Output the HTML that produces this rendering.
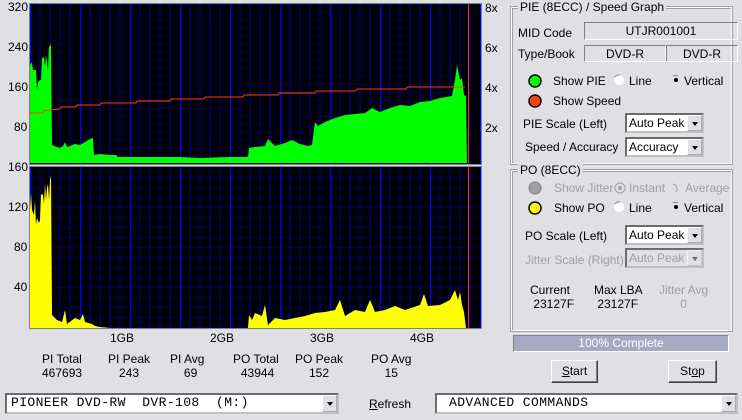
<!DOCTYPE html>
<html><head><meta charset="utf-8"><style>
body{margin:0;width:742px;height:420px;background:#e0dfe3;font-family:"Liberation Sans",sans-serif;font-size:11px;color:#000;position:relative;overflow:hidden}
.a{position:absolute;white-space:nowrap}
.grp{position:absolute;border:1px solid #fff;box-shadow:inset 1px 1px 0 #a0a0a0;outline:1px solid #a0a0a0}
.gt{position:absolute;background:#e0dfe3;padding:0 2px;top:-8px;left:6px}
.fld{position:absolute;border:1px solid;border-color:#808080 #fff #fff #808080;text-align:center;line-height:16px}
.sel{position:absolute;background:#fff;border:2px inset #c0c0c0;box-sizing:border-box;line-height:16px;padding-left:2px;font-size:12px}
.sel .ar{position:absolute;right:0;top:0;width:15px;bottom:0;background:#e0dfe3;border:1px outset #fff;box-sizing:border-box}
.sel .ar:after{content:"";position:absolute;left:4px;top:6px;border:3px solid transparent;border-top:4px solid #000;border-bottom:0;}
.btn{position:absolute;border:1px solid;border-color:#fff #404040 #404040 #fff;box-shadow:inset -1px -1px 0 #808080;text-align:center;font-size:12px}
.dis{color:#a0a0a0}
.mono{font-family:"Liberation Mono",monospace;font-size:13px;letter-spacing:0.4px;white-space:pre}
</style></head><body>
<svg class="a" style="left:0;top:0" width="500" height="335">
<defs>
<pattern id="g1" x="30" y="4" width="50" height="8" patternUnits="userSpaceOnUse">
<rect width="50" height="8" fill="#000"/>
<path d="M10 0V8M20 0V8M30 0V8M40 0V8M0 0H50" stroke="#00009a" stroke-width="1"/>
<path d="M0.5 0V8" stroke="#0000ff" stroke-width="1.5"/>
</pattern>
<pattern id="g2" x="30" y="167" width="50" height="10" patternUnits="userSpaceOnUse">
<rect width="50" height="10" fill="#000"/>
<path d="M10 0V10M20 0V10M30 0V10M40 0V10M0 0H50" stroke="#00009a" stroke-width="1"/>
<path d="M0.5 0V10" stroke="#0000ff" stroke-width="1.5"/>
</pattern>
</defs>
<rect x="29" y="3" width="453" height="162" fill="#808080"/>
<rect x="30" y="4" width="451" height="160" fill="url(#g1)"/>
<polygon fill="#00ff00" points="30,163 30,65 32,62 33,70 36,70 37,90 38,82 40,80 41,80 42,58 44,57 45,66 46,55 48,70 49,46 50,47 51,43 52,145 57,147 60,148 63,146 65,142 67,147 70,146 75,144 80,145 85,142 90,139 93,138 94,155 100,154 110,155 116,155 118,157 150,157 180,157 200,158 230,157 248,157 249,148 255,147 265,146 268,139 275,146 285,143 292,140 300,144 308,146 312,145 315,122 318,126 325,122 335,118 345,115 355,114 365,113 372,108 380,112 390,108 400,105 410,106 420,102 430,101 440,98 452,96 455,80 457,65 460,80 462,78 464,95 466,96 467,163"/>
<polyline fill="none" stroke="#ff4000" stroke-width="1" points="30,113 43,113 44,111 50,110 60,109 61,107 76,107 77,105 100,105 101,103 136,103 137,101 170,101 171,99 204,99 205,97 243,97 244,95 278,95 279,93 315,93 316,91 356,91 357,89 406,89 407,87 465,87"/>
<line x1="468.5" y1="4" x2="468.5" y2="164" stroke="#ff3000"/>
<rect x="29" y="166" width="453" height="163" fill="#808080"/>
<rect x="30" y="167" width="451" height="161" fill="url(#g2)"/>
<polygon fill="#ffff00" points="30,328 30,210 31,193 32,210 34,215 35,200 36,225 37,218 39,223 40,220 41,194 43,195 44,204 45,183 46,200 47,188 48,184 49,200 50,180 51,176 52,315 57,320 62,322 65,310 67,324 75,318 80,320 83,314 85,322 92,324 95,326 100,327 110,328 240,328 248,328 249,315 252,320 255,313 262,316 265,305 268,325 275,318 285,320 295,318 305,316 315,313 325,312 335,310 340,300 345,316 355,310 365,312 370,300 375,312 385,310 395,306 405,310 420,305 424,294 428,306 440,305 450,300 455,290 458,300 460,292 462,305 464,312 466,328"/>
<line x1="468.5" y1="167" x2="468.5" y2="328" stroke="#ff3000"/>
</svg>
<div class="a" style="left:8px;top:0px;font-size:12px">320</div>
<div class="a" style="left:8px;top:40px;font-size:12px">240</div>
<div class="a" style="left:8px;top:80px;font-size:12px">160</div>
<div class="a" style="left:14px;top:120px;font-size:12px">80</div>
<div class="a" style="left:8px;top:160px;font-size:12px">160</div>
<div class="a" style="left:8px;top:200px;font-size:12px">120</div>
<div class="a" style="left:14px;top:240px;font-size:12px">80</div>
<div class="a" style="left:14px;top:280px;font-size:12px">40</div>
<div class="a" style="left:485px;top:1px;font-size:12px">8x</div>
<div class="a" style="left:485px;top:41px;font-size:12px">6x</div>
<div class="a" style="left:485px;top:81px;font-size:12px">4x</div>
<div class="a" style="left:485px;top:121px;font-size:12px">2x</div>
<div class="a" style="left:110px;top:331px;font-size:12px">1GB</div>
<div class="a" style="left:210px;top:331px;font-size:12px">2GB</div>
<div class="a" style="left:310px;top:331px;font-size:12px">3GB</div>
<div class="a" style="left:410px;top:331px;font-size:12px">4GB</div>
<div class="a" style="left:42px;top:352px;font-size:12px">PI Total<br>467693</div>
<div class="a" style="left:108px;top:352px;font-size:12px;text-align:center">PI Peak<br>243</div>
<div class="a" style="left:170px;top:352px;font-size:12px;text-align:center">PI Avg<br>&nbsp;&nbsp;69</div>
<div class="a" style="left:233px;top:352px;font-size:12px;text-align:center">PO Total<br>&nbsp;43944</div>
<div class="a" style="left:295px;top:352px;font-size:12px;text-align:center">PO Peak<br>152</div>
<div class="a" style="left:371px;top:352px;font-size:12px;text-align:center">PO Avg<br>15</div>

<div class="grp" style="left:511px;top:7px;width:219px;height:155px"><span class="gt" style="font-size:12px">PIE (8ECC) / Speed Graph</span></div>
<div class="a" style="left:518px;top:26px;font-size:12px">MID Code</div>
<div class="fld" style="left:584px;top:22px;width:152px;height:16px;font-size:12px">UTJR001001</div>
<div class="a" style="left:518px;top:47px;font-size:12px">Type/Book</div>
<div class="fld" style="left:584px;top:45px;width:80px;height:15px;font-size:12px">DVD-R</div>
<div class="fld" style="left:666px;top:45px;width:70px;height:15px;font-size:12px">DVD-R</div>
<svg class="a" style="left:0;top:0" width="742" height="420">
<circle cx="535" cy="81" r="6" fill="#00ff00" stroke="#000" stroke-width="1.5"/>
<circle cx="535" cy="101" r="6" fill="#ff4010" stroke="#000" stroke-width="1.5"/>
<circle cx="535" cy="188" r="6" fill="#a0a0a0" stroke="#808080" stroke-width="1"/>
<circle cx="535" cy="208" r="6" fill="#ffff00" stroke="#000" stroke-width="1.5"/>
<circle cx="619" cy="80" r="5" fill="#fff"/><path d="M615 77a5 5 0 0 1 5-2" stroke="#808080" fill="none"/>
<circle cx="676" cy="80" r="2" fill="#000"/><path d="M673 76a5 5 0 0 1 5 0" stroke="#808080" fill="none"/>
<circle cx="619" cy="207" r="5" fill="#fff"/><path d="M615 204a5 5 0 0 1 5-2" stroke="#808080" fill="none"/>
<circle cx="676" cy="207" r="2" fill="#000"/><path d="M673 203a5 5 0 0 1 5 0" stroke="#808080" fill="none"/>
<circle cx="620" cy="188" r="5" fill="none" stroke="#a0a0a0"/><circle cx="620" cy="188" r="2" fill="#a0a0a0"/>
<path d="M673 184a5 5 0 0 1 3 8" stroke="#a0a0a0" fill="none"/>
</svg>
<div class="a" style="left:553px;top:74px;font-size:12px">Show PIE</div>
<div class="a" style="left:629px;top:74px;font-size:12px">Line</div>
<div class="a" style="left:684px;top:74px;font-size:12px">Vertical</div>
<div class="a" style="left:553px;top:94px;font-size:12px">Show Speed</div>
<div class="a" style="left:523px;top:117px;font-size:12px">PIE Scale (Left)</div>
<div class="sel" style="left:625px;top:113px;width:79px;height:20px">Auto Peak<span class="ar"></span></div>
<div class="a" style="left:525px;top:140px;font-size:12px">Speed / Accuracy</div>
<div class="sel" style="left:625px;top:137px;width:79px;height:20px">Accuracy<span class="ar"></span></div>

<div class="grp" style="left:511px;top:170px;width:219px;height:159px"><span class="gt" style="font-size:12px">PO (8ECC)</span></div>
<div class="a dis" style="left:554px;top:181px;font-size:12px">Show Jitter</div>
<div class="a dis" style="left:629px;top:181px;font-size:12px">Instant</div>
<div class="a dis" style="left:685px;top:181px;font-size:12px">Average</div>
<div class="a" style="left:554px;top:201px;font-size:12px">Show PO</div>
<div class="a" style="left:629px;top:201px;font-size:12px">Line</div>
<div class="a" style="left:684px;top:201px;font-size:12px">Vertical</div>
<div class="a" style="left:525px;top:229px;font-size:12px">PO Scale (Left)</div>
<div class="sel" style="left:625px;top:225px;width:79px;height:20px">Auto Peak<span class="ar"></span></div>
<div class="a dis" style="left:525px;top:253px;font-size:12px">Jitter Scale (Right)</div>
<div class="sel dis" style="left:625px;top:248px;width:79px;height:20px;background:#e0dfe3">Auto Peak<span class="ar" style="opacity:.5"></span></div>
<div class="a" style="left:530px;top:283px;font-size:12px">Current<br>&nbsp;23127F</div>
<div class="a" style="left:594px;top:283px;font-size:12px">Max LBA<br>&nbsp;23127F</div>
<div class="a dis" style="left:659px;top:283px;font-size:12px;text-align:center">Jitter Avg<br>0</div>
<div class="a" style="left:513px;top:335px;width:214px;height:15px;background:#a6a8c4;color:#fff;text-align:center;line-height:15px;font-size:12px;border:1px solid;border-color:#808080 #fff #fff #808080">100% Complete</div>
<div class="btn" style="left:551px;top:360px;width:45px;height:21px;line-height:21px"><u>S</u>tart</div>
<div class="btn" style="left:668px;top:360px;width:47px;height:21px;line-height:21px">St<u>o</u>p</div>
<div class="sel mono" style="left:5px;top:393px;width:334px;height:21px;padding-left:4px">PIONEER DVD-RW  DVR-108  (M:)<span class="ar"></span></div>
<div class="a" style="left:369px;top:397px;font-size:12px"><u>R</u>efresh</div>
<div class="sel mono" style="left:435px;top:393px;width:303px;height:21px;padding-left:12px">ADVANCED COMMANDS<span class="ar"></span></div>
</body></html>
